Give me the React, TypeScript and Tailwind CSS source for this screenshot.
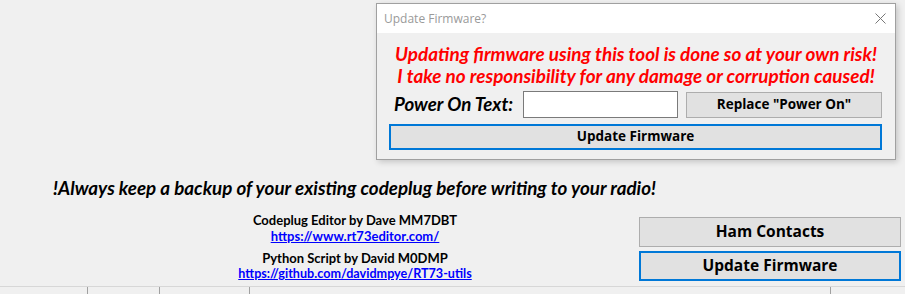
const calibri = "font-['Lato','Liberation_Sans',sans-serif]";
const segoe = "font-['Open_Sans','Liberation_Sans',sans-serif]";

const CloseIcon = () => (
  <svg width="11" height="11" viewBox="0 0 11 11" className="text-[#777]">
    <path d="M0.5 0.5 L10.5 10.5 M10.5 0.5 L0.5 10.5" stroke="currentColor" strokeWidth="1" fill="none" />
  </svg>
);

const UpdateDialog = () => {
  return (
    <div className="absolute left-[376px] top-[3px] w-[520px] h-[157px] border border-[#a0a0a0] bg-[#f0f0f0] shadow-[2px_2px_6px_rgba(0,0,0,0.18)] flex flex-col">
      {/* Title bar */}
      <div className="h-[29px] bg-white flex items-center justify-between pl-[7px] pr-[9px]">
        <span className={`${segoe} text-[12px] text-[#9a9a9a]`}>Update Firmware?</span>
        <CloseIcon />
      </div>

      <div className="flex flex-col px-[12px] pt-[10px]">
        <div className={`${calibri} text-[18.9px] font-bold italic text-[#ff0000] text-center leading-[22px]`}>
          <p>Updating firmware using this tool is done so at your own risk!</p>
          <p>I take no responsibility for any damage or corruption caused!</p>
        </div>

        <div className="flex items-center mt-[4px] h-[27px]">
          <span className={`${calibri} text-[18.7px] font-bold italic text-black pl-[5px] w-[134px]`}>
            Power On Text:
          </span>
          <input
            type="text"
            className="w-[155px] h-[27px] bg-white border border-[#7a7a7a] outline-none"
          />
          <button
            type="button"
            className={`${segoe} ml-[8px] w-[196px] h-[26px] bg-[#e1e1e1] border border-[#adadad] text-[13.5px] font-bold text-black`}
          >
            Replace "Power On"
          </button>
        </div>

        <button
          type="button"
          className={`${segoe} mt-[6px] w-[493px] h-[26px] bg-[#e1e1e1] border-2 border-[#0078d7] text-[13.5px] font-bold text-black leading-none`}
        >
          Update Firmware
        </button>
      </div>
    </div>
  );
};

const StatusBar = () => {
  return (
    <div className="h-[8px] border-t border-[#d7d7d7] flex">
      <div className="w-[88px] border-r border-[#a0a0a0]" />
      <div className="w-[72px] border-r border-[#a0a0a0]" />
      <div className="w-[90px] border-r border-[#a0a0a0]" />
      <div className="w-[581px] border-r border-[#a0a0a0]" />
      <div className="flex-1" />
    </div>
  );
};

const App = () => {
  return (
    <div className="relative w-[905px] h-[294px] bg-[#f0f0f0] overflow-hidden flex flex-col">
      <div className="flex-1 flex flex-col pt-[177px]">
        <p className={`${calibri} w-[709px] text-center text-[18.8px] font-bold italic text-black leading-[22px]`}>
          !Always keep a backup of your existing codeplug before writing to your radio!
        </p>

        <div className="flex">
          <div className={`${calibri} w-[639px] pl-[71px] text-center text-[13px] font-bold text-black pt-[13px]`}>
            <p className="leading-[16px]">Codeplug Editor by Dave MM7DBT</p>
            <a href="#" className="block leading-[16px] text-[#0000ff] underline">
              https://www.rt73editor.com/
            </a>
            <p className="mt-[7px] leading-[15px]">Python Script by David M0DMP</p>
            <a href="#" className="block leading-[15px] text-[12.6px] text-[#0000ff] underline">
              https://github.com/davidmpye/RT73-utils
            </a>
          </div>

          <div className="w-[262px] flex flex-col gap-[4px] mt-[18px]">
            <button
              type="button"
              className={`${segoe} h-[30px] bg-[#e1e1e1] border border-[#adadad] text-[15.5px] font-bold text-black`}
            >
              Ham Contacts
            </button>
            <button
              type="button"
              className={`${segoe} h-[30px] bg-[#e1e1e1] border-2 border-[#0078d7] text-[15.5px] font-bold text-black`}
            >
              Update Firmware
            </button>
          </div>
        </div>
      </div>

      <StatusBar />

      <UpdateDialog />
    </div>
  );
};

export default App;
